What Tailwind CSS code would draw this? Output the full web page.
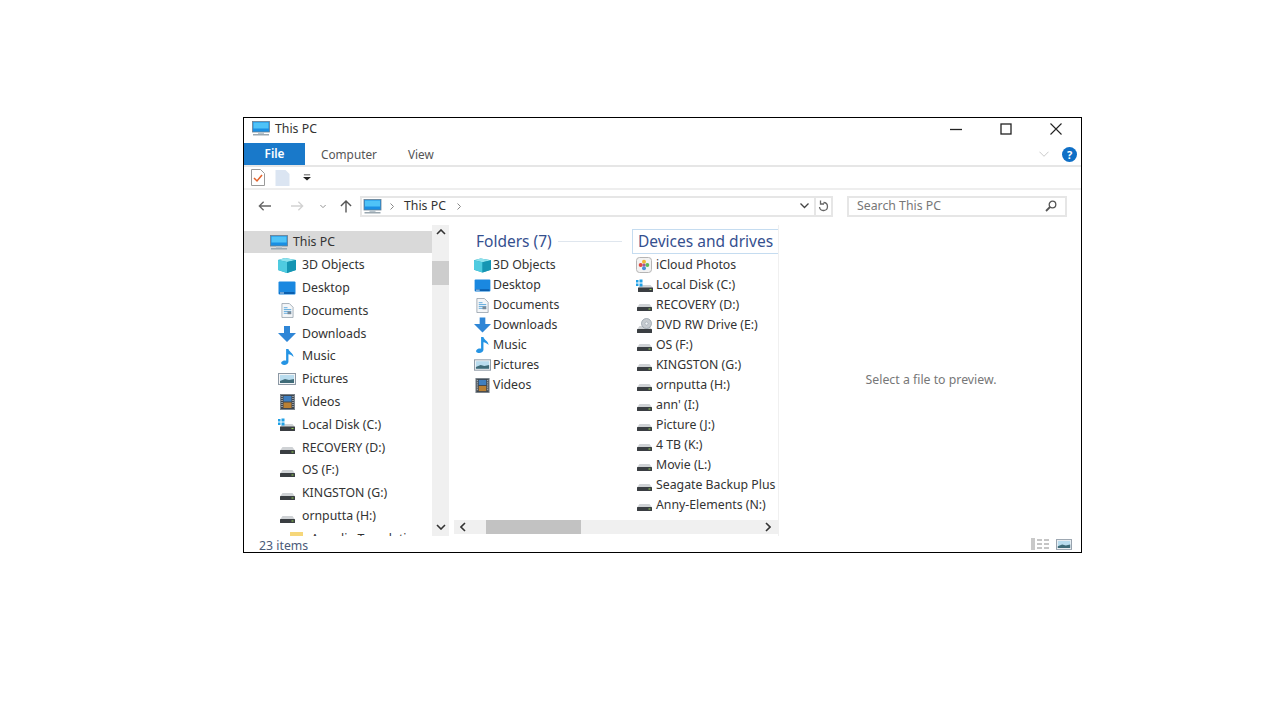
<!DOCTYPE html>
<html lang="en">
<head>
    <meta charset="UTF-8">
    <title>This PC</title>
    <script src="https://cdn.jsdelivr.net/npm/@tailwindcss/browser@4"></script>
</head>
<body class="bg-white font-['Noto_Sans',sans-serif] text-[12.3px] text-[#333]">
    <!-- icon set -->
    <svg class="hidden">
        <symbol id="pc" viewBox="0 0 18 15">
            <rect x="0.500" y="0.500" width="17" height="10.500" fill="#1a8fe3" stroke="#6b7f8f" stroke-width="0.800"/>
            <rect x="1.500" y="1.500" width="15" height="6" fill="#4fc3f7"/>
            <rect x="6" y="11" width="6" height="2" fill="#b8c4cc"/>
            <rect x="1" y="13" width="16" height="1.500" fill="#9aa7b0"/>
        </symbol>
        <symbol id="cube" viewBox="0 0 18 15">
            <path d="M7 0l11 2v10l-9 3-9-3V2z" fill="#1c9fb9"/>
            <path d="M7 0l11 2-9 2-9-2z" fill="#8fe3ee"/>
            <path d="M0 2l9 2v11l-9-3z" fill="#4fcbe0"/>
            <path d="M18 2l-9 2v11l9-3z" fill="#1595b3"/>
        </symbol>
        <symbol id="desktop" viewBox="0 0 18 14">
            <rect x="0.500" y="0.500" width="17" height="13" rx="1" fill="#1a88e0"/>
            <rect x="1.500" y="11" width="15" height="2" fill="#0b5fae"/>
            <rect x="2" y="11.500" width="4" height="1" fill="#cfe6f8"/>
        </symbol>
        <symbol id="doc" viewBox="0 0 14 16">
            <path d="M1 .5h8l4 4v11H1z" fill="#f4f6f8" stroke="#8c98a4" stroke-width="0.800"/>
            <path d="M3 5h4M3 7h8M3 9h8M3 11h8" stroke="#5aa7dc" stroke-width="1"/>
            <rect x="7" y="9" width="4" height="3" fill="#7a8a98"/>
        </symbol>
        <symbol id="down" viewBox="0 0 18 16">
            <path d="M6 0h6v7h6l-9 9-9-9h6z" fill="#2f86d6"/>
        </symbol>
        <symbol id="music" viewBox="0 0 14 17">
            <path d="M5.500 0h2.500c.5 3 5 4 5.500 8.500-1.500-2-3.500-2.500-5.500-3v8c0 2-2 3.500-4.500 3.500S-.5 15.500.5 14 3.500 12 5.500 12.500z" fill="#2594e4"/>
        </symbol>
        <symbol id="pics" viewBox="0 0 18 12">
            <rect x="0.500" y="0.500" width="17" height="11" fill="#f2f4f6" stroke="#8c98a4"/>
            <rect x="2" y="2" width="14" height="8" fill="#b9dcee"/>
            <path d="M2 10V8l5-2 4 1 5-1v4z" fill="#3f6b78"/>
        </symbol>
        <symbol id="videos" viewBox="0 0 15 16">
            <rect x="0.500" y="0.500" width="14" height="15" fill="#3f474f" stroke="#7a838b"/>
            <rect x="3.500" y="2" width="8" height="5.500" fill="#3f7fc0"/>
            <rect x="3.500" y="8.500" width="8" height="5.500" fill="#b98034"/>
            <path d="M2 2v12M13 2v12" stroke="#dfe3e6" stroke-dasharray="1 1"/>
        </symbol>
        <symbol id="disk" viewBox="0 0 15 7">
            <path d="M2.500 0h10L15 3.500H0z" fill="#cfd2d5"/>
            <rect x="0" y="3" width="15" height="4" rx="0.500" fill="#3a3e42"/>
            <rect x="11.500" y="4.500" width="2" height="1" fill="#8fd14f"/>
        </symbol>
        <symbol id="windisk" viewBox="0 0 17 13">
            <path d="M4.500 6h10L17 9H2z" fill="#cfd2d5"/>
            <rect x="2" y="8.500" width="15" height="4.500" rx="0.500" fill="#3a3e42"/>
            <rect x="13.500" y="10" width="2" height="1" fill="#8fd14f"/>
            <path d="M0 1h2.500v2.500H0zM3.500 .500h3v3h-3zM0 4.500h2.500V7H0zM3.500 4.500h3v3h-3z" fill="#1fa0e6"/>
        </symbol>
        <symbol id="dvd" viewBox="0 0 15 15">
            <path d="M2.500 8h10L15 11.500H0z" fill="#cfd2d5"/>
            <rect x="0" y="11" width="15" height="4" rx="0.500" fill="#3a3e42"/>
            <circle cx="9.500" cy="5.500" r="5" fill="#c6cbd0" stroke="#8c98a4" stroke-width="0.700"/>
            <circle cx="9.500" cy="5.500" r="1.500" fill="#f4f6f8" stroke="#8c98a4" stroke-width="0.500"/>
        </symbol>
        <symbol id="icloud" viewBox="0 0 16 16">
            <rect x="0.500" y="0.500" width="15" height="15" rx="3" fill="#f2f2f2" stroke="#b5b5b5"/>
            <circle cx="8" cy="4.700" r="2" fill="#f2b632"/>
            <circle cx="11.300" cy="8" r="2" fill="#5dbb5a"/>
            <circle cx="8" cy="11.300" r="2" fill="#4a8fd8"/>
            <circle cx="4.700" cy="8" r="2" fill="#e2483f"/>
            <circle cx="8" cy="8" r="1.500" fill="#a8569c"/>
        </symbol>
        <symbol id="folder" viewBox="0 0 13 14">
            <path d="M0 0h13v14H0z" fill="#f6d77a"/>
        </symbol>
    </svg>

    <div class="ml-[243px] mt-[117px] flex h-[436px] w-[839px] flex-col border border-black">
        <!-- Title bar -->
        <div class="flex h-[25px] shrink-0 items-center justify-between pb-[4px]">
            <div class="flex items-center pl-[8px]">
                <svg class="h-[15px] w-[18px]"><use href="#pc"/></svg>
                <span class="ml-[5px] translate-y-[1px]">This PC</span>
            </div>
            <div class="flex items-center pr-[19px]">
                <svg class="h-[12px] w-[12px]" viewBox="0 0 12 12"><path d="M0 6.500h12" stroke="#222" stroke-width="1.300"/></svg>
                <svg class="ml-[38px] h-[12px] w-[12px]" viewBox="0 0 12 12"><rect x="1" y="1" width="10" height="10" fill="none" stroke="#222" stroke-width="1.300"/></svg>
                <svg class="ml-[38px] h-[12px] w-[12px]" viewBox="0 0 12 12"><path d="M.5.500l11 11M11.500.500l-11 11" stroke="#222" stroke-width="1.100"/></svg>
            </div>
        </div>
        <!-- Ribbon tabs -->
        <div class="flex h-[24px] shrink-0 items-center border-b-2 border-[#e6e6e6]">
            <div class="flex h-[22px] w-[61px] items-center justify-center bg-[#1979ca] text-[11.800px] font-semibold text-white">File</div>
            <span class="ml-[16px] translate-y-[1px] text-[11.800px] text-[#555]">Computer</span>
            <span class="ml-[31px] translate-y-[1px] text-[11.800px] text-[#555]">View</span>
            <div class="ml-auto flex items-center pr-[4px]">
                <svg class="h-[6px] w-[10px]" viewBox="0 0 11 6"><path d="M.5.500l5 5 5-5" fill="none" stroke="#c4c4c4"/></svg>
                <div class="ml-[13px] flex h-[15px] w-[15px] items-center justify-center rounded-full bg-[#0f6fc6] text-[11px] leading-none font-bold text-white">?</div>
            </div>
        </div>
        <!-- Quick access -->
        <div class="flex h-[23px] shrink-0 items-center border-b-2 border-[#eeeeee] pl-[7px]">
            <svg class="h-[17px] w-[14px]" viewBox="0 0 14 17"><path d="M.5.500h9l4 4v12H.5z" fill="#fff" stroke="#9a9a9a"/><path d="M3 9l3 3 5-6" fill="none" stroke="#e2622b" stroke-width="1.500"/></svg>
            <svg class="ml-[10px] h-[16px] w-[15px]" viewBox="0 0 14 16"><path d="M0 0h10l4 4v12H0z" fill="#dbe5f2"/></svg>
            <svg class="ml-[13px] h-[7px] w-[8px]" viewBox="0 0 9 7"><path d="M1 0h7v1H1zM0 3h9L4.500 7z" fill="#222"/></svg>
        </div>
        <!-- Address row -->
        <div class="flex h-[35px] shrink-0 items-center pb-[3px]">
            <svg class="ml-[14px] h-[12px] w-[13px]" viewBox="0 0 15 12"><path d="M15 6H1.500M6.500 1l-5 5 5 5" fill="none" stroke="#666" stroke-width="1.500"/></svg>
            <svg class="ml-[20px] h-[12px] w-[13px]" viewBox="0 0 15 12"><path d="M0 6h13.500M8.500 1l5 5-5 5" fill="none" stroke="#d2d2d2" stroke-width="1.500"/></svg>
            <svg class="ml-[16px] h-[5px] w-[6px]" viewBox="0 0 8 5"><path d="M.5.500L4 4 7.500.500" fill="none" stroke="#888" stroke-width="1.200"/></svg>
            <svg class="ml-[14px] h-[14px] w-[12px]" viewBox="0 0 13 14"><path d="M6.500 14V1.500M1 7l5.500-5.500L12 7" fill="none" stroke="#555" stroke-width="1.500"/></svg>
            <div class="ml-[8px] flex h-[21px] w-[473px] items-center border-2 border-[#e6e6e6]">
                <svg class="ml-[1px] h-[15px] w-[19px]"><use href="#pc"/></svg>
                <svg class="ml-[8px] h-[7px] w-[4px]" viewBox="0 0 4 7"><path d="M.5.500l3 3-3 3" fill="none" stroke="#888"/></svg>
                <span class="ml-[10px]">This PC</span>
                <svg class="ml-[11px] h-[7px] w-[4px]" viewBox="0 0 4 7"><path d="M.5.500l3 3-3 3" fill="none" stroke="#888"/></svg>
                <svg class="ml-auto mr-[5px] h-[6px] w-[9px]" viewBox="0 0 9 6"><path d="M.5.500l4 4 4-4" fill="none" stroke="#444" stroke-width="1.300"/></svg>
                <div class="flex h-full w-[17px] items-center justify-center border-l-2 border-[#e6e6e6]">
                    <svg class="h-[12px] w-[11px]" viewBox="0 0 11 12"><path d="M5.500 2.500a4 4 0 1 1-4 4.500M2.500.500v3.500h3.500" fill="none" stroke="#666" stroke-width="1.300"/></svg>
                </div>
            </div>
            <div class="ml-[14px] flex h-[21px] w-[220px] items-center justify-between border-2 border-[#e6e6e6] pl-[8px] pr-[8px]">
                <span class="text-[#777]">Search This PC</span>
                <svg class="h-[12px] w-[12px]" viewBox="0 0 12 12"><circle cx="7.500" cy="4.500" r="3.300" fill="none" stroke="#555" stroke-width="1.300"/><path d="M5 7l-4 4" stroke="#555" stroke-width="1.800"/></svg>
            </div>
        </div>
        <!-- Main -->
        <div class="flex h-[311px] shrink-0">
            <!-- Nav pane -->
            <div class="w-[188px] shrink-0 overflow-hidden pt-[6px] whitespace-nowrap">
                <div class="flex h-[22px] items-center bg-[#d9d9d9] pl-[26px]">
                    <svg class="h-[15px] w-[18px]"><use href="#pc"/></svg>
                    <span class="ml-[5px]">This PC</span>
                </div>
                <div class="flex flex-col pt-[1px]">
                    <div class="flex h-[22.800px] shrink-0 items-center"><div class="flex w-[58px] justify-end pr-[6px]"><svg class="h-[15px] w-[18px]"><use href="#cube"/></svg></div>3D Objects</div>
                    <div class="flex h-[22.800px] shrink-0 items-center"><div class="flex w-[58px] justify-end pr-[6px]"><svg class="h-[14px] w-[18px]"><use href="#desktop"/></svg></div>Desktop</div>
                    <div class="flex h-[22.800px] shrink-0 items-center"><div class="flex w-[58px] justify-end pr-[8px]"><svg class="h-[15px] w-[13px]"><use href="#doc"/></svg></div>Documents</div>
                    <div class="flex h-[22.800px] shrink-0 items-center"><div class="flex w-[58px] justify-end pr-[6px]"><svg class="h-[16px] w-[18px]"><use href="#down"/></svg></div>Downloads</div>
                    <div class="flex h-[22.800px] shrink-0 items-center"><div class="flex w-[58px] justify-end pr-[8px]"><svg class="h-[16px] w-[13px]"><use href="#music"/></svg></div>Music</div>
                    <div class="flex h-[22.800px] shrink-0 items-center"><div class="flex w-[58px] justify-end pr-[6px]"><svg class="h-[12px] w-[18px]"><use href="#pics"/></svg></div>Pictures</div>
                    <div class="flex h-[22.800px] shrink-0 items-center"><div class="flex w-[58px] justify-end pr-[7px]"><svg class="h-[16px] w-[15px]"><use href="#videos"/></svg></div>Videos</div>
                    <div class="flex h-[22.800px] shrink-0 items-center"><div class="flex w-[58px] justify-end pr-[7px]"><svg class="h-[13px] w-[17px]"><use href="#windisk"/></svg></div>Local Disk (C:)</div>
                    <div class="flex h-[22.800px] shrink-0 items-center"><div class="flex w-[58px] justify-end pr-[7px]"><svg class="h-[7px] w-[15px] translate-y-[3px]"><use href="#disk"/></svg></div>RECOVERY (D:)</div>
                    <div class="flex h-[22.800px] shrink-0 items-center"><div class="flex w-[58px] justify-end pr-[7px]"><svg class="h-[7px] w-[15px] translate-y-[3px]"><use href="#disk"/></svg></div>OS (F:)</div>
                    <div class="flex h-[22.800px] shrink-0 items-center"><div class="flex w-[58px] justify-end pr-[7px]"><svg class="h-[7px] w-[15px] translate-y-[3px]"><use href="#disk"/></svg></div>KINGSTON (G:)</div>
                    <div class="flex h-[22.800px] shrink-0 items-center"><div class="flex w-[58px] justify-end pr-[7px]"><svg class="h-[7px] w-[15px] translate-y-[3px]"><use href="#disk"/></svg></div>ornputta (H:)</div>
                    <div class="flex h-[22.800px] shrink-0 items-center"><div class="flex w-[67px] justify-end pr-[8px]"><svg class="h-[14px] w-[13px]"><use href="#folder"/></svg></div>Angelia Translation</div>
                </div>
            </div>
            <!-- Nav scrollbar -->
            <div class="flex w-[17px] shrink-0 flex-col items-center bg-[#f0f0f0] pt-[4px] pb-[6px]">
                <svg class="h-[6px] w-[10px] shrink-0" viewBox="0 0 10 6"><path d="M1 5l4-4 4 4" fill="none" stroke="#333" stroke-width="1.600"/></svg>
                <div class="mt-[26px] h-[24px] w-full bg-[#cdcdcd]"></div>
                <svg class="mt-auto h-[6px] w-[10px] shrink-0" viewBox="0 0 10 6"><path d="M1 1l4 4 4-4" fill="none" stroke="#333" stroke-width="1.600"/></svg>
            </div>
            <!-- Files pane -->
            <div class="ml-[5px] flex w-[324px] shrink-0 flex-col">
                <div class="flex h-[295px] shrink-0 overflow-hidden">
                    <div class="w-[178px] shrink-0 pt-[4px]">
                        <div class="flex h-[25px] items-center pl-[22px]">
                            <span class="text-[15.500px] text-[#35508f]">Folders (7)</span>
                            <div class="ml-[6px] h-px w-[64px] bg-[#dfe6ee]"></div>
                        </div>
                        <div class="pt-[1px]">
                            <div class="flex h-[20px] items-center pl-[20px]"><svg class="mr-[2px] h-[15px] w-[17px]"><use href="#cube"/></svg>3D Objects</div>
                            <div class="flex h-[20px] items-center pl-[20px]"><svg class="mr-[2px] h-[13px] w-[17px]"><use href="#desktop"/></svg>Desktop</div>
                            <div class="flex h-[20px] items-center pl-[20px]"><svg class="mr-[2px] h-[15px] w-[17px]"><use href="#doc"/></svg>Documents</div>
                            <div class="flex h-[20px] items-center pl-[20px]"><svg class="mr-[2px] h-[16px] w-[17px]"><use href="#down"/></svg>Downloads</div>
                            <div class="flex h-[20px] items-center pl-[20px]"><svg class="mr-[2px] h-[16px] w-[17px]"><use href="#music"/></svg>Music</div>
                            <div class="flex h-[20px] items-center pl-[20px]"><svg class="mr-[2px] h-[12px] w-[17px]"><use href="#pics"/></svg>Pictures</div>
                            <div class="flex h-[20px] items-center pl-[20px]"><svg class="mr-[2px] h-[15px] w-[17px]"><use href="#videos"/></svg>Videos</div>
                        </div>
                    </div>
                    <div class="w-[146px] shrink-0 pt-[4px] whitespace-nowrap">
                        <div class="flex h-[25px] items-center border border-r-0 border-[#c5dcf0] pl-[5px]">
                            <span class="text-[15.500px] text-[#35508f]">Devices and drives</span>
                        </div>
                        <div class="pt-[1px]">
                            <div class="flex h-[20px] items-center pl-[4px]"><svg class="mr-[4px] h-[16px] w-[16px]"><use href="#icloud"/></svg>iCloud Photos</div>
                            <div class="flex h-[20px] items-center pl-[4px]"><svg class="mr-[3px] h-[13px] w-[17px]"><use href="#windisk"/></svg>Local Disk (C:)</div>
                            <div class="flex h-[20px] items-center pl-[5px]"><svg class="mr-[4px] h-[7px] w-[15px] translate-y-[2px]"><use href="#disk"/></svg>RECOVERY (D:)</div>
                            <div class="flex h-[20px] items-center pl-[5px]"><svg class="mr-[4px] h-[15px] w-[15px]"><use href="#dvd"/></svg>DVD RW Drive (E:)</div>
                            <div class="flex h-[20px] items-center pl-[5px]"><svg class="mr-[4px] h-[7px] w-[15px] translate-y-[2px]"><use href="#disk"/></svg>OS (F:)</div>
                            <div class="flex h-[20px] items-center pl-[5px]"><svg class="mr-[4px] h-[7px] w-[15px] translate-y-[2px]"><use href="#disk"/></svg>KINGSTON (G:)</div>
                            <div class="flex h-[20px] items-center pl-[5px]"><svg class="mr-[4px] h-[7px] w-[15px] translate-y-[2px]"><use href="#disk"/></svg>ornputta (H:)</div>
                            <div class="flex h-[20px] items-center pl-[5px]"><svg class="mr-[4px] h-[7px] w-[15px] translate-y-[2px]"><use href="#disk"/></svg>ann' (I:)</div>
                            <div class="flex h-[20px] items-center pl-[5px]"><svg class="mr-[4px] h-[7px] w-[15px] translate-y-[2px]"><use href="#disk"/></svg>Picture (J:)</div>
                            <div class="flex h-[20px] items-center pl-[5px]"><svg class="mr-[4px] h-[7px] w-[15px] translate-y-[2px]"><use href="#disk"/></svg>4 TB (K:)</div>
                            <div class="flex h-[20px] items-center pl-[5px]"><svg class="mr-[4px] h-[7px] w-[15px] translate-y-[2px]"><use href="#disk"/></svg>Movie (L:)</div>
                            <div class="flex h-[20px] items-center pl-[5px]"><svg class="mr-[4px] h-[7px] w-[15px] translate-y-[2px]"><use href="#disk"/></svg>Seagate Backup Plus</div>
                            <div class="flex h-[20px] items-center pl-[5px]"><svg class="mr-[4px] h-[7px] w-[15px] translate-y-[2px]"><use href="#disk"/></svg>Anny-Elements (N:)</div>
                        </div>
                    </div>
                </div>
                <!-- Horizontal scrollbar -->
                <div class="flex h-[14px] shrink-0 items-center bg-[#f0f0f0]">
                    <svg class="ml-[6px] h-[10px] w-[6px]" viewBox="0 0 6 10"><path d="M5 1L1 5l4 4" fill="none" stroke="#333" stroke-width="1.600"/></svg>
                    <div class="ml-[20px] h-full w-[95px] bg-[#c2c2c2]"></div>
                    <svg class="ml-auto mr-[7px] h-[10px] w-[6px]" viewBox="0 0 6 10"><path d="M1 1l4 4-4 4" fill="none" stroke="#333" stroke-width="1.600"/></svg>
                </div>
            </div>
            <!-- Preview pane -->
            <div class="flex flex-1 items-center justify-center border-l border-[#f0f0f0] pl-[2px] text-[#777]">Select a file to preview.</div>
        </div>
        <!-- Status bar -->
        <div class="flex h-[16px] shrink-0 items-center justify-between pl-[15px] pr-[9px] text-[#4a5a78]">
            <span class="translate-y-[2px] leading-[12px]">23 items</span>
            <div class="flex items-center">
                <svg class="h-[12px] w-[18px]" viewBox="0 0 18 12"><path d="M0 0h4v12H0z" fill="#c9c9c9"/><path d="M6 2h5M13 2h5M6 6h5M13 6h5M6 10h5M13 10h5" stroke="#8c8c8c"/></svg>
                <svg class="ml-[7px] h-[11px] w-[16px]"><use href="#pics"/></svg>
            </div>
        </div>
    </div>
</body>
</html>
